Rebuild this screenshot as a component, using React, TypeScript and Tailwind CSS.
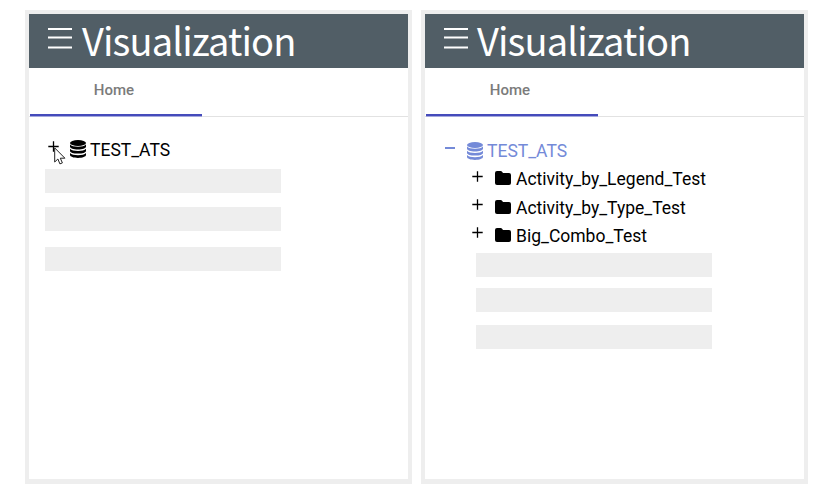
import type { ReactNode } from "react";

function MenuIcon() {
  return (
    <svg className="mt-3 h-8 w-6 shrink-0" viewBox="0 0 24 32" fill="none" stroke="#fff" strokeWidth="2">
      <path d="M0 3h24M0 11.500h24M0 21.500h24" />
    </svg>
  );
}

function DatabaseIcon() {
  return (
    <svg className="h-[18px] w-4 shrink-0" viewBox="0 0 16 18" fill="currentColor">
      <ellipse cx="8" cy="3" rx="8" ry="3" />
      <path d="M0 4.600c1.200 1.500 4.400 2.200 8 2.200s6.800-.7 8-2.200v2.100c0 1.500-3.600 2.700-8 2.700s-8-1.200-8-2.700z" />
      <path d="M0 8.800c1.200 1.500 4.400 2.200 8 2.200s6.800-.7 8-2.200v2.100c0 1.500-3.600 2.700-8 2.700s-8-1.200-8-2.700z" />
      <path d="M0 13c1.200 1.500 4.400 2.200 8 2.200s6.800-.7 8-2.200v2.100c0 1.600-3.600 2.900-8 2.900s-8-1.300-8-2.900z" />
    </svg>
  );
}

function FolderIcon() {
  return (
    <svg className="h-[14px] w-4 shrink-0" viewBox="0 0 16 14" fill="currentColor">
      <path d="M2 0h3.600q.8 0 1.300.6L8 2h6q2 0 2 2v8q0 2-2 2H2q-2 0-2-2V2Q0 0 2 0z" />
    </svg>
  );
}

function PlusIcon() {
  return (
    <svg className="h-[11px] w-[11px] shrink-0" viewBox="0 0 11 11" stroke="currentColor" strokeWidth="1.300">
      <path d="M.3 5.500h10.400M5.500.3v10.400" />
    </svg>
  );
}

function Cursor() {
  return (
    <svg className="absolute left-[6px] top-[6px] h-[18px] w-3" viewBox="0 0 12 18">
      <path
        d="M.7.900v14.100l3.200-3 2 4.900 2.500-1-2.100-4.700h4.600z"
        fill="#fff"
        stroke="#222"
        strokeWidth="1"
      />
    </svg>
  );
}

function Panel({ title, children }: { title: string; children: ReactNode }) {
  return (
    <section className="h-[474px] w-[387px] border-4 border-b-5 border-[#eeeeee] bg-white">
      <header className="flex h-[54px] bg-[#515e66] pl-[19px]">
        <MenuIcon />
        <h1 className={`${title} whitespace-nowrap font-['Noto_Sans_CJK_SC',sans-serif] text-[38px] leading-[52px] font-normal tracking-[-0.850px] text-white`}>
          Visualization
        </h1>
      </header>
      <nav className="flex h-[49px] border-b border-[#e2e2e2] pl-px">
        <div className="h-12 w-[172px] border-b-2 border-[#454bbb] pr-1 text-center text-[15px] leading-[44px] font-medium text-[#7b7b7b] shadow-[0_1px_0_#a5a8de]">
          Home
        </div>
      </nav>
      {children}
    </section>
  );
}

function Bar() {
  return <div className="h-6 w-[236px] bg-[#eeeeee]" />;
}

function Folder({ name }: { name: string }) {
  return (
    <li className="flex h-[28.300px] items-center">
      <div className="-mt-[6px] flex">
        <PlusIcon />
      </div>
      <div className="-mt-[2px] ml-3 flex">
        <FolderIcon />
      </div>
      <span className="ml-[5px] whitespace-nowrap">{name}</span>
    </li>
  );
}

export default function App() {
  return (
    <main className="flex h-[501px] w-[828px] gap-[9px] overflow-hidden bg-white pt-[10px] pl-[25px] font-[Roboto,sans-serif] text-[17.500px] leading-7 text-black">
      <Panel title="ml-[10px]">
        <div className="pt-[18px]">
          <div className="flex h-7 items-center pl-[19px]">
            <div className="relative -mt-[5px] flex">
              <PlusIcon />
              <Cursor />
            </div>
            <div className="ml-[11px] flex">
              <DatabaseIcon />
            </div>
            <span className="mt-[2px] ml-1">TEST_ATS</span>
          </div>
          <div className="mt-[6px] flex flex-col pl-4">
            <Bar />
            <div className="mt-[14px]"><Bar /></div>
            <div className="mt-4"><Bar /></div>
          </div>
        </div>
      </Panel>
      <Panel title="ml-[9px]">
        <div className="pt-5">
          <div className="flex h-7 items-center pl-5 text-[#748ad8]">
            <div className="-mt-[6px] h-[1.500px] w-[10px] bg-[#748ad8]" />
            <div className="ml-3 flex">
              <DatabaseIcon />
            </div>
            <span className="ml-1">TEST_ATS</span>
          </div>
          <ul className="h-[84px] pt-[0.200px] pl-[47px]">
            <Folder name="Activity_by_Legend_Test" />
            <Folder name="Activity_by_Type_Test" />
            <Folder name="Big_Combo_Test" />
          </ul>
          <div className="mt-1 flex flex-col pl-[51px]">
            <Bar />
            <div className="mt-[11px]"><Bar /></div>
            <div className="mt-[13px]"><Bar /></div>
          </div>
        </div>
      </Panel>
    </main>
  );
}
